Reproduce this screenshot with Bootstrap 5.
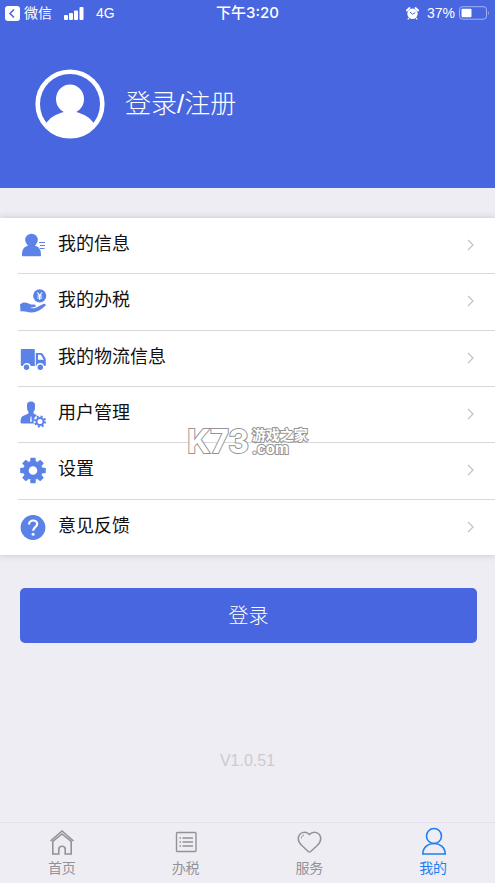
<!DOCTYPE html>
<html lang="zh-CN">
<head>
<meta charset="utf-8">
<meta name="viewport" content="width=device-width, initial-scale=1">
<title>我的</title>
<link href="https://cdn.jsdelivr.net/npm/bootstrap@5.3.0/dist/css/bootstrap.min.css" rel="stylesheet">
<style>
  body { font-family: "Liberation Sans", "Noto Sans CJK SC", sans-serif; background: #eeedf3; color: #111; }
  .hero { background: #4866e0; color: #fff; min-height: 188px; }
  .status { height: 26px; padding: 0 5px; font-size: 14px; line-height: 20px; }
  .status > div { flex: 1 1 0; }
  .status-time { font-family: Inter, "Noto Sans CJK SC", sans-serif; font-weight: 500; font-size: 15px; }
  .profile { gap: 20px; padding: 43px 35px 0; font-size: 26px; line-height: 36px; font-weight: 300; color: #fff; }
  .menu { margin-top: 30px; min-height: 337px; background: #fff; box-shadow: 0 0 7px rgba(60, 60, 90, .22); }
  .menu-row { gap: 11px; margin-left: 18px; padding: 0 20px 1px 1px; font-size: 18px; line-height: 26px; color: #111; border-bottom: 1px solid #d9d9dd; }
  .menu-row:last-of-type { border-bottom: 0; }
  .menu-row .label { padding-bottom: 2px; }
  .menu-icon { fill: #5b82e6; }
  .login { margin: 33px 18px 0 20px; height: 55px; font-size: 20px; font-weight: 300; border-radius: 5px; background: #4866e0; color: #fff; }
  .login:hover { background: #3d5ad2; color: #fff; }
  .version { font-size: 16px; line-height: 24px; color: #cbcbd0; padding-bottom: 49px; }
  .tabs { height: 61px; border-top: 1px solid #e2e1e7; font-size: 14px; line-height: 20px; }
  .tabs a { color: #929297; padding-top: 4px; gap: 1px; }
  .tabs a.active { color: #1f7df2; }
  .line-icon { fill: none; stroke: currentColor; }
  .watermark { left: 50%; top: 207px; transform: translateX(-50%); gap: 3px; font-family: Inter, "Noto Sans CJK SC", sans-serif; color: #fff; -webkit-text-stroke: 2px #959595; paint-order: stroke fill; pointer-events: none; }
  .wm-name { font-size: 32px; line-height: 34px; font-weight: 700; }
  .wm-site { font-size: 14px; line-height: 14px; font-weight: 700; }
  .wm-domain { font-size: 15px; }
</style>
<script src="https://cdn.jsdelivr.net/npm/bootstrap@5.3.0/dist/js/bootstrap.bundle.min.js" defer></script>
</head>
<body class="d-flex flex-column min-vh-100">
<header class="hero">
  <div class="status d-flex align-items-center">
    <div class="d-flex align-items-center">
      <svg width="15" height="15" viewBox="0 0 15 15" aria-hidden="true"><rect width="15" height="15" rx="3" fill="#fff"/><path d="M9 3.5 5 7.5l4 4" fill="none" stroke="#4866e0" stroke-width="1.6"/></svg>
      <span class="ms-1 me-2">微信</span>
      <svg class="ms-1" width="20" height="13" viewBox="0 0 20 13" fill="#fff" aria-hidden="true"><rect y="8" width="4" height="5" rx="1"/><rect x="5" y="6" width="4" height="7" rx="1"/><rect x="10" y="3.500" width="4" height="9.500" rx="1"/><rect x="15.500" y="0" width="4" height="13" rx="1"/></svg>
      <span class="ms-2 ps-1">4G</span>
    </div>
    <span class="status-time">下午3:20</span>
    <div class="d-flex align-items-center justify-content-end">
      <svg class="me-2" width="13" height="13" viewBox="0 0 13 13" aria-hidden="true"><circle cx="6.500" cy="6.800" r="5.200" fill="#fff"/><path d="M.8 3.500 3.500 1M12.200 3.500 9.500 1" stroke="#fff" stroke-width="1.800" stroke-linecap="round"/><path d="m2.800 11-1 1.500M10.200 11l1 1.500" stroke="#fff" stroke-width="1.300"/><path d="M4 5l2.500 2.300L9.300 5.500" fill="none" stroke="#4866e0"/></svg>
      <span class="me-1">37%</span>
      <svg width="31" height="14" viewBox="0 0 31 14" aria-hidden="true"><rect x=".5" y=".7" width="27" height="12.500" rx="3" fill="none" stroke="#a7b5f0"/><rect x="2.500" y="2.700" width="10" height="8.500" rx="1" fill="#fff"/><path d="M29 4.800q1.800 2.200 0 4.400z" fill="#a7b5f0"/></svg>
    </div>
  </div>
  <a href="#" class="profile d-flex align-items-center text-decoration-none">
    <svg width="70" height="70" viewBox="0 0 70 70" aria-hidden="true"><circle cx="35" cy="35" r="32.300" fill="none" stroke="#fff" stroke-width="4.600"/><ellipse cx="35" cy="30" rx="14" ry="14.500" fill="#fff"/><path d="M29 41h12v2c8 2 15 6 18 12-6 8-14 13-24 13s-18-5-24-13c3-6 10-10 18-12z" fill="#fff"/></svg>
    <span>登录/注册</span>
  </a>
</header>

<main class="flex-grow-1 d-flex flex-column">
  <nav class="menu position-relative d-flex flex-column" aria-label="菜单">
    <a href="#" class="menu-row flex-fill d-flex align-items-center text-decoration-none">
      <svg class="menu-icon" width="28" height="28" viewBox="0 0 28 28" aria-hidden="true"><circle cx="12.500" cy="9" r="6.300"/><path d="M9 13h7v1.500c4.500 1.500 6 4.500 6 9.500 0 1-.3 1.300-1 1.300H4c-.7 0-1-.3-1-1.300 0-5 1.500-8 6-9.500z"/><path d="M20 11.500h6M21 14.500h5M21 17.500h4.500" stroke="#5b82e6" stroke-width="1.200"/></svg>
      <span class="label flex-grow-1">我的信息</span>
      <svg class="line-icon" width="9" height="12" viewBox="0 0 9 12" aria-hidden="true"><path d="M2 1l5 5-5 5" stroke="#c3c3c7" stroke-width="1.300"/></svg>
    </a>
    <a href="#" class="menu-row flex-fill d-flex align-items-center text-decoration-none">
      <svg class="menu-icon" width="28" height="28" viewBox="0 0 28 28" aria-hidden="true"><circle cx="20.700" cy="8.800" r="6.600"/><path d="M18.400 5.500l2.300 3 2.300-3M20.700 8.500v4.300M18.300 9h4.800M18.300 11h4.800" fill="none" stroke="#fff" stroke-width="1.200"/><path d="M1 17.500c2-2.400 5.500-2.600 8-1.300 2 1 3 1.300 5.500 1.200 2.300 0 3.200 2 1.300 2.700l-4.500.6c2.500 1.200 5.500.4 8-1.200l5-2.600c2-.7 3.200.6 1.800 2.100-4.600 4.500-9 6.800-14.300 6.500-3.500-.3-6.800-1.800-10.300-.9z"/></svg>
      <span class="label flex-grow-1">我的办税</span>
      <svg class="line-icon" width="9" height="12" viewBox="0 0 9 12" aria-hidden="true"><path d="M2 1l5 5-5 5" stroke="#c3c3c7" stroke-width="1.300"/></svg>
    </a>
    <a href="#" class="menu-row flex-fill d-flex align-items-center text-decoration-none">
      <svg class="menu-icon" width="28" height="28" viewBox="0 0 28 28" aria-hidden="true"><path d="M2.800 5h12q1 0 1 1v16h-4a4.200 4.200 0 0 0-8 0h-1q-1 0-1-1V6q0-1 1-1z"/><path fill-rule="evenodd" d="M16.800 9h5q1.300 0 2 1l2.500 4q.5 1 .5 2v5q0 1-1 1h-.6a4.200 4.200 0 0 0-8 0h-.4zM19 10.800v5h5.700l-2.200-4q-.5-1-1.500-1z"/><circle cx="7.500" cy="23.300" r="2.700"/><circle cx="21.300" cy="23.300" r="2.700"/></svg>
      <span class="label flex-grow-1">我的物流信息</span>
      <svg class="line-icon" width="9" height="12" viewBox="0 0 9 12" aria-hidden="true"><path d="M2 1l5 5-5 5" stroke="#c3c3c7" stroke-width="1.300"/></svg>
    </a>
    <a href="#" class="menu-row flex-fill d-flex align-items-center text-decoration-none">
      <svg class="menu-icon" width="28" height="28" viewBox="0 0 28 28" aria-hidden="true"><path d="M8 5q0-3.500 4-3.500T16 5v3q0 2.500-1.500 4v1.500l3.500 1.700c-2.500 1.500-4 4.500-3 8.300H3q-1.500 0-1.500-1.500c0-3.500.8-5.500 3-6.300l5-2.200V12Q8 10.500 8 8z"/><path d="m12 16.500-.6 5h1.200z" fill="#fff" stroke="#fff" stroke-width=".5"/><circle cx="21" cy="21.500" r="3.500" fill="none" stroke="#5b82e6" stroke-width="2"/><circle cx="21" cy="21.500" r="5.100" fill="none" stroke="#5b82e6" stroke-width="2" stroke-dasharray="2 2"/></svg>
      <span class="label flex-grow-1">用户管理</span>
      <svg class="line-icon" width="9" height="12" viewBox="0 0 9 12" aria-hidden="true"><path d="M2 1l5 5-5 5" stroke="#c3c3c7" stroke-width="1.300"/></svg>
    </a>
    <a href="#" class="menu-row flex-fill d-flex align-items-center text-decoration-none">
      <svg class="menu-icon" width="28" height="28" viewBox="0 0 28 28" aria-hidden="true"><g transform="translate(14 14.500)"><circle r="7" fill="none" stroke="#5b82e6" stroke-width="5.400"/><g id="teeth"><path d="M-2.900-9l.4-3.800h5l.4 3.800zM-2.900 9l.4 3.800h5L2.900 9zM-9-2.900l-3.800.4v5l3.800.4zM9-2.900l3.800.4v5L9 2.900z"/></g><use href="#teeth" transform="rotate(45)"/></g></svg>
      <span class="label flex-grow-1">设置</span>
      <svg class="line-icon" width="9" height="12" viewBox="0 0 9 12" aria-hidden="true"><path d="M2 1l5 5-5 5" stroke="#c3c3c7" stroke-width="1.300"/></svg>
    </a>
    <a href="#" class="menu-row flex-fill d-flex align-items-center text-decoration-none">
      <svg class="menu-icon" width="28" height="28" viewBox="0 0 28 28" aria-hidden="true"><circle cx="14" cy="14.500" r="12.400"/><path d="M10 11.500c0-5.500 8.200-5 8.200-.4 0 3-4.100 3.200-4.100 6.700" fill="none" stroke="#fff" stroke-width="2.200"/><circle cx="14.100" cy="21.300" r="1.500" fill="#fff"/></svg>
      <span class="label flex-grow-1">意见反馈</span>
      <svg class="line-icon" width="9" height="12" viewBox="0 0 9 12" aria-hidden="true"><path d="M2 1l5 5-5 5" stroke="#c3c3c7" stroke-width="1.300"/></svg>
    </a>
    <div class="watermark position-absolute d-flex align-items-center text-nowrap">
      <span class="wm-name">K73</span>
      <span class="wm-site d-flex flex-column"><span>游戏之家</span><span class="wm-domain">.com</span></span>
    </div>
  </nav>
  <button type="button" class="login btn border-0 p-0">登录</button>
  <p class="version text-center mt-auto mb-0">V1.0.51</p>
</main>

<nav class="tabs d-flex" aria-label="底部导航">
  <a href="#" class="col d-flex flex-column align-items-center text-decoration-none">
    <svg class="line-icon" width="28" height="30" viewBox="0 0 28 30" stroke-width="1.600" aria-hidden="true"><path d="M2.500 14 14 4l11.500 10M4.800 14.500V27h6v-4.500a3.200 3.200 0 0 1 6.400 0V27h6V14.500L14 7z"/></svg>
    <span>首页</span>
  </a>
  <a href="#" class="col d-flex flex-column align-items-center text-decoration-none">
    <svg class="line-icon" width="28" height="30" viewBox="0 0 28 30" stroke-width="1.400" aria-hidden="true"><rect x="4.500" y="5.500" width="19.500" height="19" rx="1"/><path d="M7.500 11H9m1.500 0h10.500M7.500 15H9m1.500 0h10.500M7.500 19H9m1.500 0h10.500"/></svg>
    <span>办税</span>
  </a>
  <a href="#" class="col d-flex flex-column align-items-center text-decoration-none">
    <svg class="line-icon" width="28" height="30" viewBox="0 0 28 30" stroke-width="1.500" aria-hidden="true"><path d="M14.500 7.500C11 3.500 3.300 5 3.300 12c0 3 1.700 4.700 3.500 6.500l6.500 6q1.200 1 2.400 0l6.500-6c1.800-1.800 3.500-3.500 3.500-6.500 0-7-7.700-8.500-11.200-4.500z"/><path d="M6.300 11.500c.1-2 1-3 2.700-3.300" stroke-width="1"/></svg>
    <span>服务</span>
  </a>
  <a href="#" class="active col d-flex flex-column align-items-center text-decoration-none" aria-current="page">
    <svg class="line-icon" width="28" height="30" viewBox="0 0 28 30" stroke-width="1.600" aria-hidden="true"><circle cx="15" cy="9" r="7.500"/><path d="M3.800 27c0-14 22.400-14 22.400 0z"/></svg>
    <span>我的</span>
  </a>
</nav>
</body>
</html>
